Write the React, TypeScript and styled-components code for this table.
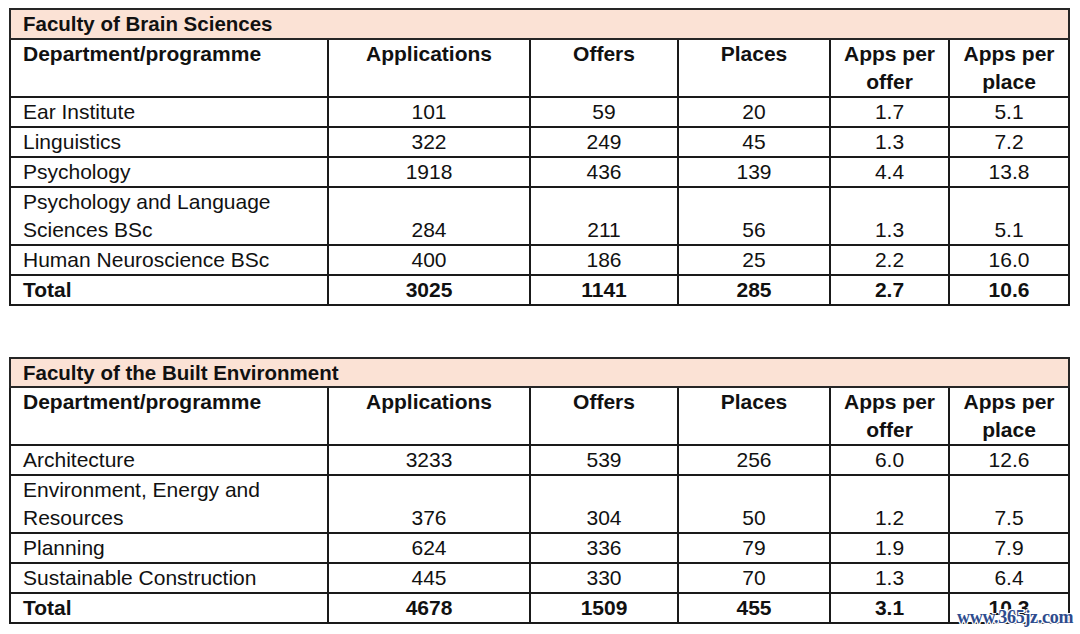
import React from 'react';
import styled, { createGlobalStyle } from 'styled-components';

type Row = {
  name: string[];
  apps: string;
  offers: string;
  places: string;
  perOffer: string;
  perPlace: string;
};

type Faculty = {
  title: string;
  rows: Row[];
  total: Omit<Row, 'name'>;
};

const faculties: Faculty[] = [
  {
    title: 'Faculty of Brain Sciences',
    rows: [
      { name: ['Ear Institute'], apps: '101', offers: '59', places: '20', perOffer: '1.7', perPlace: '5.1' },
      { name: ['Linguistics'], apps: '322', offers: '249', places: '45', perOffer: '1.3', perPlace: '7.2' },
      { name: ['Psychology'], apps: '1918', offers: '436', places: '139', perOffer: '4.4', perPlace: '13.8' },
      {
        name: ['Psychology and Language', 'Sciences BSc'],
        apps: '284',
        offers: '211',
        places: '56',
        perOffer: '1.3',
        perPlace: '5.1',
      },
      { name: ['Human Neuroscience BSc'], apps: '400', offers: '186', places: '25', perOffer: '2.2', perPlace: '16.0' },
    ],
    total: { apps: '3025', offers: '1141', places: '285', perOffer: '2.7', perPlace: '10.6' },
  },
  {
    title: 'Faculty of the Built Environment',
    rows: [
      { name: ['Architecture'], apps: '3233', offers: '539', places: '256', perOffer: '6.0', perPlace: '12.6' },
      {
        name: ['Environment, Energy and', 'Resources'],
        apps: '376',
        offers: '304',
        places: '50',
        perOffer: '1.2',
        perPlace: '7.5',
      },
      { name: ['Planning'], apps: '624', offers: '336', places: '79', perOffer: '1.9', perPlace: '7.9' },
      { name: ['Sustainable Construction'], apps: '445', offers: '330', places: '70', perOffer: '1.3', perPlace: '6.4' },
    ],
    total: { apps: '4678', offers: '1509', places: '455', perOffer: '3.1', perPlace: '10.3' },
  },
];

const columnWidths = [318, 202, 148, 152, 119, 120];

const GlobalStyle = createGlobalStyle`
  body {
    margin: 0;
    background: #ffffff;
    font-family: "Liberation Sans", Arial, sans-serif;
    color: #111111;
  }
`;

const Page = styled.div`
  position: relative;
  width: 1080px;
  height: 634px;
  padding: 8px 0 0 9px;
  box-sizing: border-box;
  display: flex;
  flex-direction: column;
  gap: 51px;
`;

const Table = styled.table`
  border-collapse: collapse;
  table-layout: fixed;
  width: 1061px;
  font-size: 21px;
  line-height: 28px;
`;

const TitleCell = styled.th`
  background: #fbe2d5;
  border: 2px solid #262626;
  text-align: left;
  padding: 0 12px;
  font-weight: 700;
  font-size: 20.5px;
  line-height: 27.5px;
`;

const HeadCell = styled.th<{ $left?: boolean }>`
  border: 2px solid #1a1a1a;
  text-align: ${(p) => (p.$left ? 'left' : 'center')};
  vertical-align: top;
  padding: 0 ${(p) => (p.$left ? '12px' : '4px')};
  font-weight: 700;
`;

const Cell = styled.td<{ $left?: boolean; $bold?: boolean }>`
  border: 2px solid #1a1a1a;
  text-align: ${(p) => (p.$left ? 'left' : 'center')};
  vertical-align: bottom;
  padding: 0 ${(p) => (p.$left ? '12px' : '4px')};
  font-weight: ${(p) => (p.$bold ? 700 : 400)};
  white-space: nowrap;
`;

const Line = styled.div``;

const Watermark = styled.div`
  position: absolute;
  left: 957px;
  top: 607px;
  font-family: "Liberation Serif", "DejaVu Serif", serif;
  font-size: 18px;
  line-height: 20px;
  font-weight: 700;
  color: #2e4c8e;
  letter-spacing: -0.3px;
  text-shadow: 1px 1px 0 #ffffff, -1px -1px 0 #ffffff, 1px -1px 0 #ffffff, -1px 1px 0 #ffffff;
`;

const FacultyTable = ({ faculty }: { faculty: Faculty }) => (
  <Table>
    <colgroup>
      {columnWidths.map((w, i) => (
        <col key={i} style={{ width: w }} />
      ))}
    </colgroup>
    <thead>
      <tr>
        <TitleCell colSpan={6}>{faculty.title}</TitleCell>
      </tr>
      <tr>
        <HeadCell $left>
          Department/programme
          <br />
          &nbsp;
        </HeadCell>
        <HeadCell>Applications</HeadCell>
        <HeadCell>Offers</HeadCell>
        <HeadCell>Places</HeadCell>
        <HeadCell>
          Apps per
          <br />
          offer
        </HeadCell>
        <HeadCell>
          Apps per
          <br />
          place
        </HeadCell>
      </tr>
    </thead>
    <tbody>
      {faculty.rows.map((row) => (
        <tr key={row.name.join(' ')}>
          <Cell $left>
            {row.name.map((part) => (
              <Line key={part}>{part}</Line>
            ))}
          </Cell>
          <Cell>{row.apps}</Cell>
          <Cell>{row.offers}</Cell>
          <Cell>{row.places}</Cell>
          <Cell>{row.perOffer}</Cell>
          <Cell>{row.perPlace}</Cell>
        </tr>
      ))}
      <tr>
        <Cell $left $bold>
          Total
        </Cell>
        <Cell $bold>{faculty.total.apps}</Cell>
        <Cell $bold>{faculty.total.offers}</Cell>
        <Cell $bold>{faculty.total.places}</Cell>
        <Cell $bold>{faculty.total.perOffer}</Cell>
        <Cell $bold>{faculty.total.perPlace}</Cell>
      </tr>
    </tbody>
  </Table>
);

const App = () => {
  return (
    <>
      <GlobalStyle />
      <Page>
        {faculties.map((f) => (
          <FacultyTable key={f.title} faculty={f} />
        ))}
        <Watermark>www.365jz.com</Watermark>
      </Page>
    </>
  );
};

export default App;
